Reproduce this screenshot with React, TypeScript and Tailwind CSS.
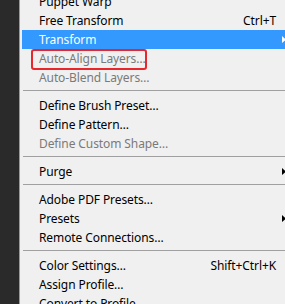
import React from "react";

type Item =
  | { type: "sep" }
  | { type: "item"; label: string; shortcut?: string; arrow?: boolean; disabled?: boolean; active?: boolean };

const items: Item[] = [
  { type: "item", label: "Puppet Warp" },
  { type: "item", label: "Free Transform", shortcut: "Ctrl+T" },
  { type: "item", label: "Transform", arrow: true, active: true },
  { type: "item", label: "Auto-Align Layers…", disabled: true },
  { type: "item", label: "Auto-Blend Layers…", disabled: true },
  { type: "sep" },
  { type: "item", label: "Define Brush Preset…" },
  { type: "item", label: "Define Pattern…" },
  { type: "item", label: "Define Custom Shape…", disabled: true },
  { type: "sep" },
  { type: "item", label: "Purge", arrow: true },
  { type: "sep" },
  { type: "item", label: "Adobe PDF Presets…" },
  { type: "item", label: "Presets", arrow: true },
  { type: "item", label: "Remote Connections…" },
  { type: "sep" },
  { type: "item", label: "Color Settings…", shortcut: "Shift+Ctrl+K" },
  { type: "item", label: "Assign Profile…" },
  { type: "item", label: "Convert to Profile…" },
];

function Arrow({ white }: { white?: boolean }) {
  return (
    <svg width="4" height="7" viewBox="0 0 4 7" className="block">
      <path d="M0 0 L4 3.5 L0 7 Z" fill={white ? "#ffffff" : "#000000"} />
    </svg>
  );
}

export default function App() {
  return (
    <div
      className="w-[285px] h-[304px] overflow-hidden flex bg-[#2a2a2a]"
      style={{ fontFamily: '"Noto Sans", "Segoe UI", sans-serif' }}
    >
      <div className="w-[19px] shrink-0 bg-[#2a2a2a]" />
      <div className="relative w-[271px] shrink-0 border-l border-[#9a9a9a] bg-[#f0f0f0] px-[2px]">
        <div className="-mt-[8px] flex flex-col">
          {items.map((it, i) =>
            it.type === "sep" ? (
              <div key={i} className="h-[9px] pt-[3px] pl-[1px]">
                <div className="h-[1px] bg-[#a0a0a0]" />
              </div>
            ) : (
              <div
                key={i}
                className={`h-[19px] flex items-center text-[12px] leading-none tracking-[-0.1px] ${
                  it.active ? "bg-[#3399ff] text-white" : it.disabled ? "text-[#7a7a7a]" : "text-black"
                }`}
              >
                <span className="pl-[17px] flex-1 whitespace-nowrap">{it.label}</span>
                {it.shortcut && <span className="whitespace-nowrap">{it.shortcut}</span>}
                <span className="w-[12px] flex items-center pl-[6px]">
                  {it.arrow && <Arrow white={it.active} />}
                </span>
              </div>
            )
          )}
        </div>
        <div className="absolute left-[11px] top-[49px] w-[116px] h-[21px] border-2 border-[#e8262b] rounded-[3px]" />
      </div>
    </div>
  );
}
